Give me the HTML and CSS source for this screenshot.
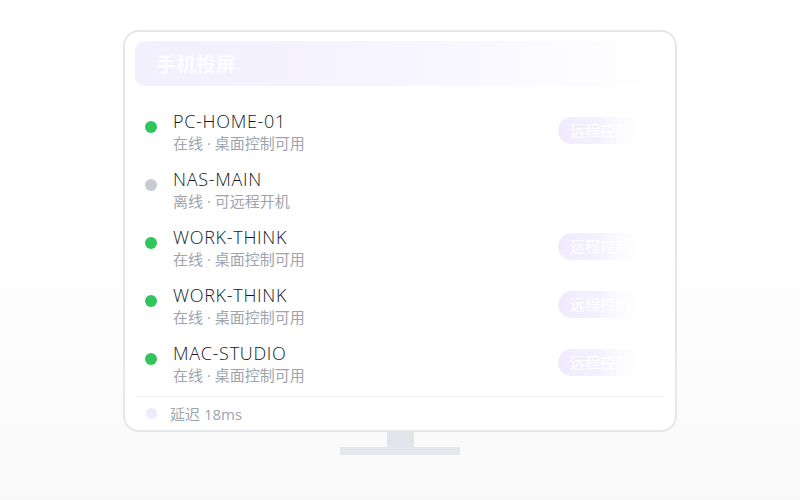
FILE: index.html
```html
<!DOCTYPE html>
<html lang="zh-CN">
<head>
<meta charset="utf-8">
<title>手机投屏</title>
<link rel="stylesheet" href="styles.css">
</head>
<body>
<div class="stage">
  <div class="monitor">
    <div class="header"><span class="title">手机投屏</span></div>
    <div class="list">
      <div class="row">
        <span class="dot on"></span>
        <div class="info"><div class="name">PC-HOME-01</div><div class="sub">在线 · 桌面控制可用</div></div>
        <span class="btn">远程控制</span>
      </div>
      <div class="row">
        <span class="dot off"></span>
        <div class="info"><div class="name">NAS-MAIN</div><div class="sub">离线 · 可远程开机</div></div>
      </div>
      <div class="row">
        <span class="dot on"></span>
        <div class="info"><div class="name">WORK-THINK</div><div class="sub">在线 · 桌面控制可用</div></div>
        <span class="btn">远程控制</span>
      </div>
      <div class="row">
        <span class="dot on"></span>
        <div class="info"><div class="name">WORK-THINK</div><div class="sub">在线 · 桌面控制可用</div></div>
        <span class="btn">远程控制</span>
      </div>
      <div class="row">
        <span class="dot on"></span>
        <div class="info"><div class="name">MAC-STUDIO</div><div class="sub">在线 · 桌面控制可用</div></div>
        <span class="btn">远程控制</span>
      </div>
    </div>
    <div class="divider"></div>
    <div class="footer"><span class="fdot"></span><span class="ftext">延迟 18ms</span></div>
  </div>
  <div class="neck"></div>
  <div class="base"></div>
</div>
</body>
</html>
```
FILE: styles.css
```css
* { box-sizing: border-box; }
html, body { margin: 0; padding: 0; }
body {
  font-family: "Open Sans", "Noto Sans CJK SC", sans-serif;
  width: 800px;
  height: 500px;
  overflow: hidden;
  background: linear-gradient(180deg, #ffffff 0%, #ffffff 45%, #f9f9fa 100%);
}
.stage {
  padding-top: 30px;
  display: flex;
  flex-direction: column;
  align-items: center;
}
.monitor {
  width: 554px;
  height: 402px;
  border: 2px solid #e4e7eb;
  border-radius: 16px;
  padding: 9px 10px 0 10px;
  display: flex;
  flex-direction: column;
  background: #ffffff;
}
.header {
  height: 45px;
  border-radius: 10px;
  background: linear-gradient(90deg, #f3f0fe 0%, #f6f4ff 45%, #fbfaff 75%, #ffffff 100%);
  display: flex;
  align-items: center;
  padding: 2px 0 0 21px;
  flex-shrink: 0;
}
.title {
  color: #fdfcff;
  font-size: 20px;
  font-weight: 700;
  line-height: 24px;
}
.list {
  margin-top: 12px;
  display: flex;
  flex-direction: column;
}
.row {
  height: 58px;
  display: flex;
  align-items: flex-start;
  padding: 0 24px 0 10px;
}
.dot {
  width: 12px;
  height: 12px;
  border-radius: 50%;
  margin-top: 23px;
  flex-shrink: 0;
}
.dot.on { background: #31c65b; }
.dot.off { background: #c8cbd2; }
.info {
  margin-left: 16px;
  padding-top: 12px;
}
.name {
  font-size: 18px;
  line-height: 22px;
  color: #15191f;
  font-weight: 300;
  letter-spacing: 0.7px;
}
.sub {
  font-size: 15px;
  line-height: 22px;
  color: #a0a5ad;
  font-weight: 400;
}
.btn {
  margin-left: auto;
  margin-top: 19px;
  height: 27px;
  width: 83px;
  padding: 0 12px;
  border-radius: 14px;
  background: linear-gradient(90deg, #efebfd 0%, #f3f0fe 45%, #fbfaff 75%, #ffffff 100%);
  color: #ffffff;
  font-size: 15px;
  line-height: 27px;
  white-space: nowrap;
  overflow: hidden;
}
.divider {
  margin-top: 8px;
  height: 1px;
  background: #eef0f3;
  flex-shrink: 0;
}
.footer {
  height: 33px;
  display: flex;
  align-items: center;
  padding-left: 11px;
}
.fdot {
  width: 11px;
  height: 11px;
  border-radius: 50%;
  background: #efebfd;
}
.ftext {
  margin-left: 13px;
  font-size: 15px;
  color: #a0a5ad;
  font-weight: 400;
}
.neck {
  width: 27px;
  height: 15px;
  background: #e1e5e9;
}
.base {
  width: 120px;
  height: 8px;
  background: #e4e7eb;
}
```
